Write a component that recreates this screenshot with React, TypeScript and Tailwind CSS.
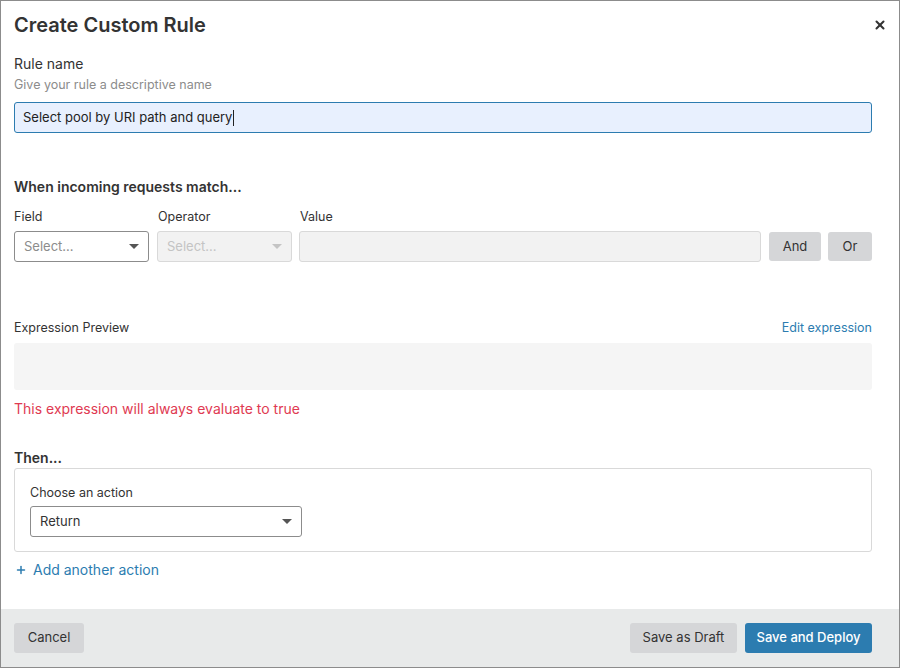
import { Plus, X } from "lucide-react";

function Caret({ muted = false }: { muted?: boolean }) {
  return (
    <svg width="10" height="5" viewBox="0 0 10 5" className={muted ? "text-[#c4c4c4]" : "text-[#555]"}>
      <path d="M0 0h10L5 5z" fill="currentColor" />
    </svg>
  );
}

export default function App() {
  return (
    <div
      className="flex h-[668px] w-[900px] flex-col border border-[#8c8c8c] bg-white text-[#333]"
      style={{ fontFamily: "Inter, 'Liberation Sans', sans-serif" }}
    >
      <div className="flex-1 pl-[13px] pr-[27px]">
        <div className="flex items-center justify-between pt-[12px]">
          <h1 className="text-[20px] font-semibold leading-[24px] text-[#333]">Create Custom Rule</h1>
          <button type="button" className="mr-[-15px] text-[#333]" aria-label="Close">
            <X size={14} strokeWidth={3.5} />
          </button>
        </div>

        <div className="mt-[18px] text-[14px] leading-[18px]">Rule name</div>
        <div className="mt-[4px] text-[12.5px] leading-[16px] text-[#8c8c8c]">Give your rule a descriptive name</div>
        <div className="mt-[9px] flex h-[31px] items-center rounded-[3px] border border-[#2c7cb0] bg-[#e8f0fe] px-[8px] text-[13px] text-[#222]">
          Select pool by URI path and query
          <span className="ml-[1px] inline-block h-[16px] w-px bg-[#222]" />
        </div>

        <div className="mt-[45px] text-[14px] font-semibold leading-[18px]">When incoming requests match...</div>

        <div className="mt-[13px] flex gap-[8px] text-[12.5px] leading-[16px]">
          <div className="w-[135px]">Field</div>
          <div className="w-[135px] pl-[1px]">Operator</div>
          <div>Value</div>
        </div>
        <div className="mt-[6px] flex items-center">
          <div className="flex h-[31px] w-[135px] items-center justify-between rounded-[3px] border border-[#8c8c8c] bg-white px-[9px] text-[13px] text-[#8c8c8c]">
            Select...
            <Caret />
          </div>
          <div className="ml-[8px] flex h-[31px] w-[135px] items-center justify-between rounded-[3px] border border-[#d9d9d9] bg-[#f2f2f2] px-[9px] text-[13px] text-[#c4c4c4]">
            Select...
            <Caret muted />
          </div>
          <div className="ml-[7px] h-[31px] flex-1 rounded-[3px] border border-[#d9d9d9] bg-[#f2f2f2]" />
          <button type="button" className="ml-[8px] h-[29px] w-[52px] rounded-[3px] bg-[#d5d6d8] text-[13px] text-[#333]">
            And
          </button>
          <button type="button" className="ml-[7px] h-[29px] w-[44px] rounded-[3px] bg-[#d5d6d8] text-[13px] text-[#333]">
            Or
          </button>
        </div>

        <div className="mt-[58px] flex items-center justify-between text-[12.5px] leading-[16px]">
          <span>Expression Preview</span>
          <a className="text-[#2c7cb0]">Edit expression</a>
        </div>
        <div className="mt-[7px] h-[47px] rounded-[3px] bg-[#f5f5f5]" />
        <div className="mt-[10px] text-[14px] leading-[18px] text-[#e03a52]">This expression will always evaluate to true</div>

        <div className="mt-[31px] text-[14px] font-semibold leading-[18px]">Then...</div>
        <div className="mt-[1px] rounded-[3px] border border-[#d9d9d9] px-[15px] pb-[14px] pt-[16px]">
          <div className="text-[12.5px] leading-[16px]">Choose an action</div>
          <div className="mt-[5px] flex h-[31px] w-[272px] items-center justify-between rounded-[3px] border border-[#8c8c8c] bg-white px-[9px] text-[13px] text-[#333]">
            Return
            <Caret />
          </div>
        </div>
        <div className="mt-[9px] flex items-center gap-[6px] pl-[1px] text-[14px] leading-[18px] text-[#2c7cb0]">
          <Plus size={12} strokeWidth={3} />
          <span>Add another action</span>
        </div>
      </div>

      <div className="flex h-[58px] items-center justify-between bg-[#e8eaea] pl-[13px] pr-[27px]">
        <button type="button" className="h-[30px] w-[70px] rounded-[3px] bg-[#d5d6d8] text-[13px] text-[#333]">
          Cancel
        </button>
        <div className="flex gap-[8px]">
          <button type="button" className="h-[30px] w-[107px] rounded-[3px] bg-[#d5d6d8] text-[13px] text-[#333]">
            Save as Draft
          </button>
          <button type="button" className="h-[30px] w-[127px] rounded-[3px] bg-[#2c7cb0] text-[13px] font-medium text-white">
            Save and Deploy
          </button>
        </div>
      </div>
    </div>
  );
}
